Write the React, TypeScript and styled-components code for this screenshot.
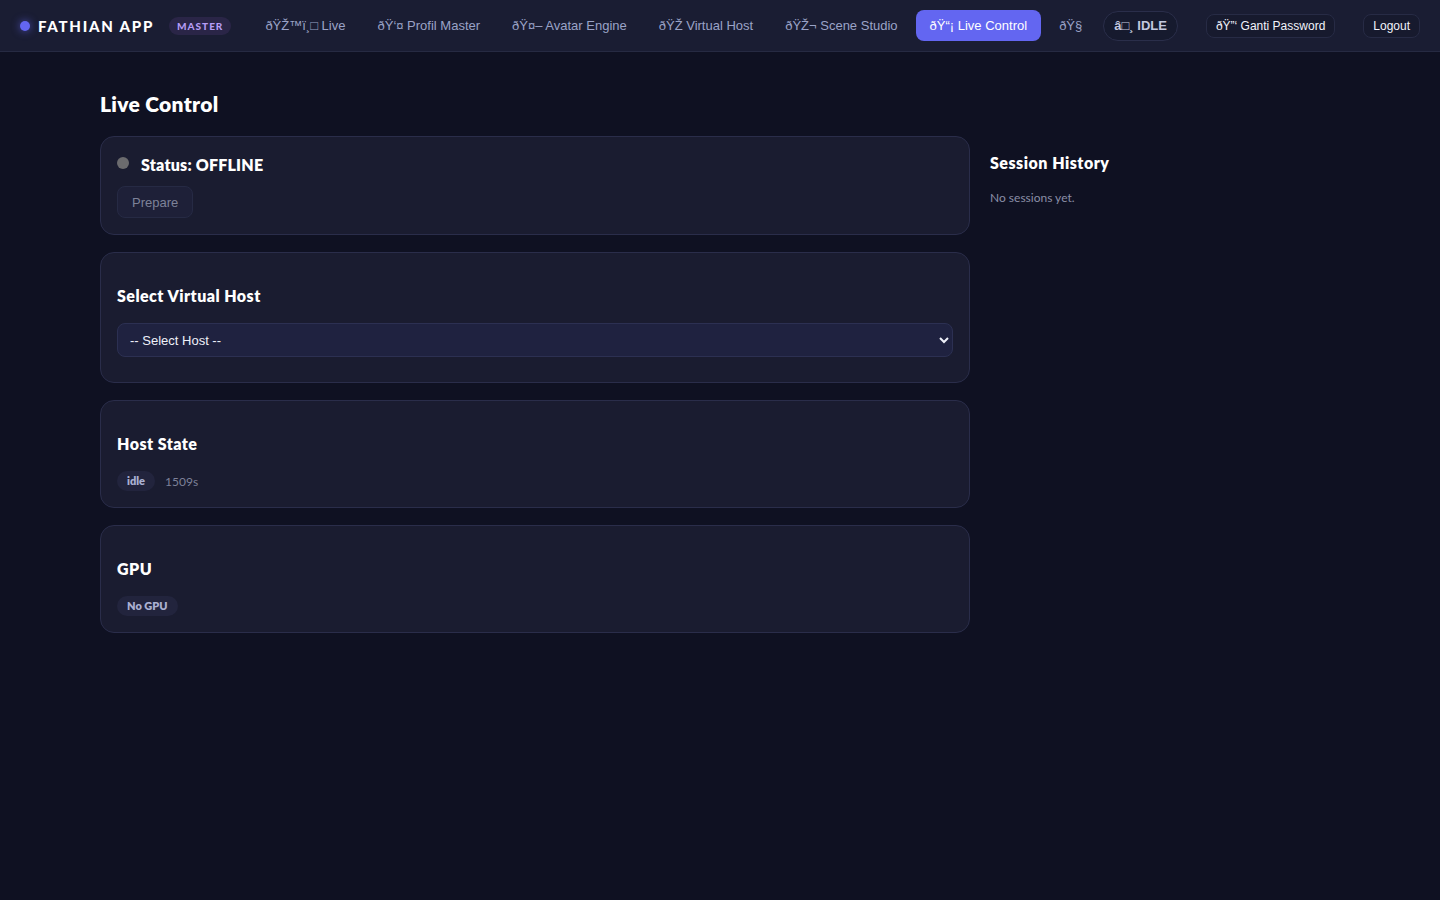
import React, { useState } from 'react';
import styled, { createGlobalStyle } from 'styled-components';

const GlobalStyle = createGlobalStyle`
    html, body {
        margin: 0;
        padding: 0;
        background: #0f1122;
        color: #f1f3fb;
        font-family: Lato, "Noto Sans", sans-serif;
    }
    * { box-sizing: border-box; }
`;

// labels keep the mis-decoded emoji exactly as the page shows them
const links = [
    { id: 'live', label: 'ðŸŽ™ï¸\u25A1 Live' },
    { id: 'profil', label: 'ðŸ‘¤ Profil Master' },
    { id: 'avatar', label: 'ðŸ¤– Avatar Engine' },
    { id: 'host', label: 'ðŸŽ\u00AD Virtual Host' },
    { id: 'scene', label: 'ðŸŽ¬ Scene Studio' },
    { id: 'control', label: 'ðŸ“¡ Live Control' },
    { id: 'lab', label: 'ðŸ§' },
];

const App: React.FC = () => {
    const [active, setActive] = useState('control');
    const [host, setHost] = useState('');

    return (
        <>
            <GlobalStyle />
            <Nav>
                <Brand>
                    <BrandDot />
                    <BrandName>FATHIAN APP</BrandName>
                    <RoleBadge>MASTER</RoleBadge>
                </Brand>
                <Links>
                    {links.map((l) => (
                        <NavLink key={l.id} $active={active === l.id} onClick={() => setActive(l.id)}>
                            {l.label}
                        </NavLink>
                    ))}
                </Links>
                <StatePill>â{'\u25A1'}¸ IDLE</StatePill>
                <Actions>
                    <GhostButton>ðŸ”‘ Ganti Password</GhostButton>
                    <GhostButton>Logout</GhostButton>
                </Actions>
            </Nav>

            <Page>
                <Title>Live Control</Title>
                <Grid>
                    <Column>
                        <Card>
                            <StatusRow>
                                <StatusDot />
                                <StatusText>Status: OFFLINE</StatusText>
                            </StatusRow>
                            <ActionButton disabled>Prepare</ActionButton>
                        </Card>

                        <Card>
                            <CardTitle>Select Virtual Host</CardTitle>
                            <Select value={host} onChange={(e) => setHost(e.target.value)}>
                                <option value="">-- Select Host --</option>
                            </Select>
                        </Card>

                        <Card>
                            <CardTitle>Host State</CardTitle>
                            <Meta>
                                <Pill>idle</Pill>
                                <Muted>1509s</Muted>
                            </Meta>
                        </Card>

                        <Card>
                            <CardTitle>GPU</CardTitle>
                            <Meta>
                                <Pill>No GPU</Pill>
                            </Meta>
                        </Card>
                    </Column>

                    <Sidebar>
                        <SideTitle>Session History</SideTitle>
                        <Empty>No sessions yet.</Empty>
                    </Sidebar>
                </Grid>
            </Page>
        </>
    );
};

const Nav = styled.nav`
    display: flex;
    align-items: center;
    height: 52px;
    padding: 0 21px 0 20px;
    background: #1a1d33;
    border-bottom: 1px solid #262a42;
    white-space: nowrap;
`;
const Brand = styled.div`
    display: flex;
    align-items: center;
    flex-shrink: 0;
    margin-right: 20px;
`;
const BrandDot = styled.span`
    width: 10px;
    height: 10px;
    border-radius: 50%;
    background: #6366f1;
    box-shadow: 0 0 8px rgba(99, 102, 241, 0.7);
    margin-right: 8px;
`;
const BrandName = styled.span`
    font-family: Lato, sans-serif;
    font-weight: 900;
    font-size: 15px;
    letter-spacing: 1.75px;
    color: #ffffff;
`;
const RoleBadge = styled.span`
    margin-left: 15px;
    padding: 3px 8px;
    border-radius: 10px;
    background: #2a2547;
    color: #b59cf5;
    font-family: Lato, sans-serif;
    font-weight: 900;
    font-size: 10px;
    letter-spacing: 1px;
`;
const Links = styled.div`
    display: flex;
    align-items: center;
    gap: 4px;
`;
const NavLink = styled.button<{ $active?: boolean }>`
    border: none;
    cursor: pointer;
    height: 31px;
    padding: 0 14px;
    border-radius: 8px;
    font-family: "Liberation Sans", Arial, sans-serif;
    font-size: 13px;
    background: ${({ $active }) => ($active ? '#6366f1' : 'transparent')};
    color: ${({ $active }) => ($active ? '#ffffff' : '#9aa3c7')};
`;
const StatePill = styled.span`
    margin-left: 7px;
    height: 30px;
    display: flex;
    align-items: center;
    padding: 0 10px;
    border-radius: 15px;
    border: 1px solid #2a2e4a;
    background: #161a2e;
    color: #c3c8df;
    font-family: "Liberation Sans", Arial, sans-serif;
    font-weight: 700;
    font-size: 13px;
`;
const Actions = styled.div`
    display: flex;
    align-items: center;
    gap: 28px;
    margin-left: 28px;
`;
const GhostButton = styled.button`
    height: 24px;
    padding: 0 9px;
    border-radius: 8px;
    border: 1px solid #272b45;
    background: #171a2e;
    color: #f1f3fb;
    font-family: "Liberation Sans", Arial, sans-serif;
    font-size: 12px;
    cursor: pointer;
`;
const Page = styled.main`
    max-width: 1240px;
    margin: 0 auto;
    padding: 38px 0 40px;
`;
const Title = styled.h2`
    margin: 0 0 18px;
    font-size: 21px;
    font-weight: 800;
    letter-spacing: 0.3px;
    line-height: 28px;
    color: #ffffff;
`;
const Grid = styled.div`
    display: grid;
    grid-template-columns: 870px 1fr;
    gap: 20px;
    align-items: start;
`;
const Column = styled.div`
    display: flex;
    flex-direction: column;
    gap: 17px;
`;
const Card = styled.section`
    background: #1a1c30;
    border: 1px solid #2a2d4a;
    border-radius: 14px;
    padding: 16px;
`;
const StatusRow = styled.div`
    display: flex;
    align-items: center;
    gap: 12px;
    height: 22px;
    margin-bottom: 11px;
`;
const StatusDot = styled.span`
    width: 12px;
    height: 12px;
    border-radius: 50%;
    background: #6b6b6e;
    margin-top: -3px;
`;
const StatusText = styled.span`
    font-weight: 800;
    font-size: 16px;
    letter-spacing: 0.2px;
    color: #ffffff;
`;
const ActionButton = styled.button`
    height: 32px;
    padding: 0 14px;
    border-radius: 8px;
    border: 1px solid #262a44;
    background: #1e2038;
    color: #7d8298;
    font-family: "Liberation Sans", Arial, sans-serif;
    font-size: 13px;
    &:disabled { cursor: not-allowed; }
`;
const CardTitle = styled.h3`
    margin: 16px 0 16px;
    font-size: 16px;
    line-height: 22px;
    font-weight: 800;
    letter-spacing: 0.45px;
    color: #ffffff;
`;
const Select = styled.select`
    display: block;
    width: 100%;
    height: 34px;
    margin-bottom: 9px;
    padding: 0 8px;
    border-radius: 8px;
    border: 1px solid #2c3052;
    background: #1f2240;
    color: #eef0f8;
    font-family: "Liberation Sans", Arial, sans-serif;
    font-size: 13px;
    color-scheme: dark;
`;
const Meta = styled.div`
    display: flex;
    align-items: center;
    gap: 10px;
`;
const Pill = styled.span`
    padding: 3px 10px;
    border-radius: 10px;
    background: #22243d;
    color: #aab0d2;
    font-size: 11px;
    font-weight: 800;
    line-height: 14px;
`;
const Muted = styled.span`
    font-size: 12px;
    color: #7d8199;
`;
const Sidebar = styled.aside`
    padding-top: 16px;
`;
const SideTitle = styled.h3`
    margin: 0 0 16px;
    font-size: 16px;
    line-height: 22px;
    font-weight: 800;
    letter-spacing: 0.5px;
    color: #ffffff;
`;
const Empty = styled.p`
    margin: 0;
    font-size: 12px;
    color: #8a8ea6;
`;

export default App;
